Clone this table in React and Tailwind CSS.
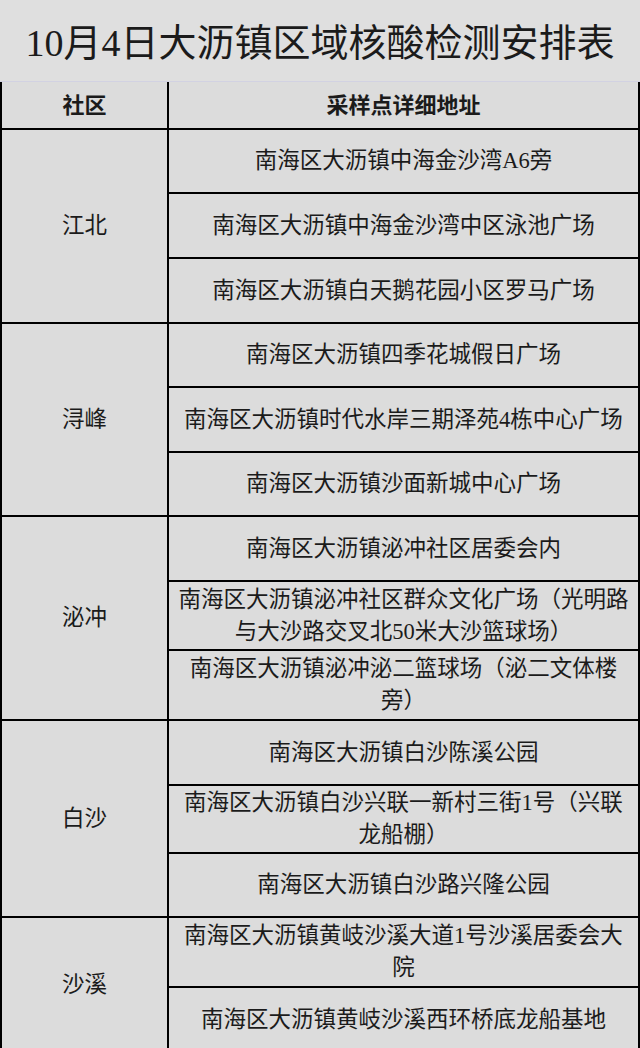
import React from "react";

const groups = [
  {
    name: "江北",
    rows: [
      { h: "h-[64px]", t: "南海区大沥镇中海金沙湾A6旁" },
      { h: "h-[65px]", t: "南海区大沥镇中海金沙湾中区泳池广场" },
      { h: "h-[63px]", t: "南海区大沥镇白天鹅花园小区罗马广场" },
    ],
  },
  {
    name: "浔峰",
    rows: [
      { h: "h-[64px]", t: "南海区大沥镇四季花城假日广场" },
      { h: "h-[65px]", t: "南海区大沥镇时代水岸三期泽苑4栋中心广场" },
      { h: "h-[62px]", t: "南海区大沥镇沙面新城中心广场" },
    ],
  },
  {
    name: "泌冲",
    rows: [
      { h: "h-[65px]", t: "南海区大沥镇泌冲社区居委会内" },
      { h: "h-[69px]", t: "南海区大沥镇泌冲社区群众文化广场（光明路与大沙路交叉北50米大沙篮球场）" },
      { h: "h-[68px]", t: "南海区大沥镇泌冲泌二篮球场（泌二文体楼旁）" },
    ],
  },
  {
    name: "白沙",
    rows: [
      { h: "h-[65px]", t: "南海区大沥镇白沙陈溪公园" },
      { h: "h-[68px]", t: "南海区大沥镇白沙兴联一新村三街1号（兴联龙船棚）" },
      { h: "h-[62px]", t: "南海区大沥镇白沙路兴隆公园" },
    ],
  },
  {
    name: "沙溪",
    rows: [
      { h: "h-[70px]", t: "南海区大沥镇黄岐沙溪大道1号沙溪居委会大院" },
      { h: "h-[64px]", t: "南海区大沥镇黄岐沙溪西环桥底龙船基地" },
    ],
  },
];

export default function App() {
  return (
    <div
      lang="zh-CN"
      className="w-[640px] h-[1048px] overflow-hidden bg-[#dcdcdc] text-[#1b1b1b]"
      style={{ fontFamily: '"Liberation Serif", "Noto Sans CJK SC", sans-serif' }}
    >
      <div className="h-[82px] flex items-center justify-center bg-[#dfdfdf] border-b border-[#d2d2e2] text-[38px] leading-none pt-[4px]">
        10月4日大沥镇区域核酸检测安排表
      </div>
      <div className="border-x-2 border-black">
        <div className="flex h-[48px] border-b-2 border-black font-bold text-[22px]">
          <div className="w-[167px] border-r-2 border-black flex items-center justify-center">社区</div>
          <div className="flex-1 flex items-center justify-center">采样点详细地址</div>
        </div>
        {groups.map((g) => (
          <div key={g.name} className="flex border-b-2 border-black">
            <div className="w-[167px] shrink-0 border-r-2 border-black flex items-center justify-center text-[22.5px]">
              {g.name}
            </div>
            <div className="flex-1 flex flex-col">
              {g.rows.map((r, i) => (
                <div
                  key={i}
                  className={`${r.h} ${i < g.rows.length - 1 ? "border-b-2 border-black" : ""} flex items-center justify-center px-[7px] text-center text-[22.5px] leading-[32px]`}
                >
                  {r.t}
                </div>
              ))}
            </div>
          </div>
        ))}
      </div>
    </div>
  );
}
